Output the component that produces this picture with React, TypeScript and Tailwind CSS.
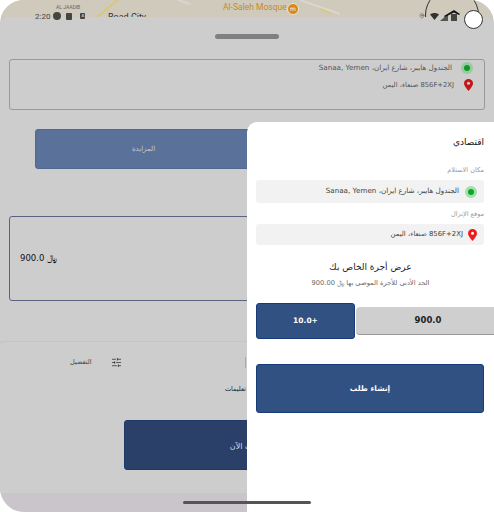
import React from 'react';
import { MapPin, SlidersHorizontal } from 'lucide-react';

const PICKUP = 'الجندول هايبر، شارع ايران، Sanaa, Yemen';
const DROPOFF = '856F+2XJ صنعاء، اليمن';

const GreenDot = ({ dim }: { dim?: boolean }) => (
  <span className={`w-[12px] h-[12px] rounded-full flex items-center justify-center shrink-0 ${dim ? 'bg-[#9ccaa0]' : 'bg-[#a5dfab]'}`}>
    <span className={`w-[6px] h-[6px] rounded-full ${dim ? 'bg-[#0a9a22]' : 'bg-[#0aa82a]'}`} />
  </span>
);

const RedPin = ({ dim }: { dim?: boolean }) => (
  <svg width="9" height="12" viewBox="0 0 9 12" className="shrink-0">
    <path d="M4.5 0C2 0 0 1.900 0 4.300 0 7.300 4.500 12 4.500 12S9 7.300 9 4.300C9 1.900 7 0 4.500 0Z" fill={dim ? '#c81414' : '#ef1c1c'} />
    <circle cx="4.500" cy="4.300" r="1.500" fill={dim ? '#cdcdcd' : '#fff'} />
  </svg>
);

const Background = () => (
  <div className="absolute inset-0 bg-[#c9c5cb] rounded-t-[24px] rounded-bl-[24px] overflow-hidden flex flex-col">
    {/* map strip behind the status bar */}
    <div className="h-[17px] bg-[#cfcabc] relative shrink-0 overflow-hidden">
      <svg width="494" height="17" viewBox="0 0 494 17" className="absolute inset-0">
        <path d="M97 17 118 0" stroke="#d8c87a" strokeWidth="2" fill="none" />
        <path d="M178 0 190 4M300 0 340 14" stroke="#d9d6d0" strokeWidth="2" fill="none" />
        <path d="M320 9 332 14" stroke="#d8c87a" strokeWidth="1.500" fill="none" />
      </svg>
      <span className="absolute left-[56px] top-[3px] text-[5px] leading-[8px] text-[#666] font-['Roboto',sans-serif]">AL JAADIB</span>
      <span className="absolute left-[108px] top-[12px] text-[9px] leading-[11px] text-[#333] font-['Roboto',sans-serif]">Road City</span>
      <span className="absolute left-[223px] top-[1px] text-[8.500px] leading-[12px] text-[#c98a1a] font-['Roboto',sans-serif]">Al-Saleh Mosque</span>
      <span className="absolute left-[287px] top-[3px] w-[12px] h-[12px] rounded-full bg-[#d98a0e] border border-[#e8e4da] flex items-center justify-center text-[6px] leading-[6px] text-white">m</span>
      <span className="absolute left-[425px] top-[-12px] w-[54px] h-[54px] rounded-full border border-[#333]" />
    </div>

    <div className="bg-[#cdcdcd] h-[324px] shrink-0 flex flex-col rounded-t-[8px]">
      <div className="mt-[17px] self-center w-[64px] h-[5px] rounded-full bg-[#808080]" />
      <div dir="rtl" className="mx-[9px] mt-[20px] h-[51px] border border-[#999] rounded-[3px] pr-[11px] pt-[2px] flex flex-col gap-[5px]">
        <div className="flex items-center gap-[9px] h-[12px] text-[7.200px] text-[#555]">
          <GreenDot dim />
          <span>{PICKUP}</span>
        </div>
        <div className="flex items-center gap-[10px] h-[12px] text-[6.800px] text-[#555]">
          <RedPin dim />
          <span>{DROPOFF}</span>
        </div>
      </div>
      <div className="ml-[35px] mt-[19px] h-[40px] w-[217px] bg-[#5a7199] border border-[#4f6894] rounded-[3px] flex items-center justify-center">
        <span className="text-[7px] text-[#c4cbd6]">المزايدة</span>
      </div>
      <div className="ml-[9px] mt-[47px] h-[85px] w-[476px] border border-[#5a6480] rounded-[3px] flex items-center pl-[10px]">
        <span className="text-[8.500px] text-[#111]">900.0 ﷼</span>
      </div>
    </div>

    <div className="bg-[#cdcdcd] border-t border-[#c4c4c4] h-[152px] rounded-tl-[4px] shrink-0 flex flex-col">
      <div className="flex items-center h-[40px] pt-[1px]">
        <span className="ml-[70px] w-[26px] text-[6.500px] text-[#444]">التفضيل</span>
        <SlidersHorizontal className="ml-[15px] w-[11px] h-[11px] text-[#222]" strokeWidth={1.500} />
        <span className="ml-[123px] w-px h-[11px] bg-[#aaa]" />
      </div>
      <div className="h-[16px] pl-[225px] flex items-center">
        <span className="text-[6.500px] text-[#222]">تعليمات</span>
      </div>
      <div className="ml-[124px] mt-[22px] h-[50px] w-[246px] bg-[#2a4069] border border-[#203a68] rounded-[3px] flex items-center justify-center">
        <span className="text-[8px] text-[#d8dce4] pt-[4px]">اطلب الآن</span>
      </div>
    </div>
  </div>
);

const StatusBar = () => (
  <div className="absolute left-0 right-0 top-[10px] h-[12px] flex items-center pl-[35px] pr-[11px] text-[#333]">
    <span className="text-[8px] text-[#444] font-['Roboto',sans-serif] translate-y-[1px]">2:20</span>
    <span className="ml-[3px] w-[8px] h-[8px] rounded-full bg-[#444]" />
    <span className="ml-[5px] w-[6px] h-[7px] rounded-[1px] bg-[#444]" />
    <span className="ml-[8px] w-[5px] h-[6px] rounded-[1px] bg-[#444] text-[4px] leading-[6px] text-center text-white">A</span>
    <MapPin className="ml-auto w-[6px] h-[8px] text-[#555]" />
    <svg width="9" height="7" viewBox="0 0 9 7" className="ml-[5px]"><path d="M0 1.500C2.500-.5 6.500-.5 9 1.500L4.500 7Z" fill="#333" /></svg>
    <svg width="20" height="11" viewBox="0 0 20 11" className="ml-[1px] -mt-[1px]">
      <path d="M0 11 8 4v7Z" fill="#555" />
      <path d="M4 6 14 0l6 4-1 1-5-2.500L5 7Z" fill="#111" />
      <rect x="11" y="4" width="6" height="7" fill="#444" />
    </svg>
    <span className="ml-[4px] translate-y-[3px] w-[19px] h-[19px] rounded-full bg-white border border-[#333]" />
  </div>
);

const FareDrawer = () => (
  <div dir="rtl" className="absolute left-[247px] right-0 top-[122px] bottom-0 bg-white rounded-tl-[10px] flex flex-col pr-[10px]">
    <h2 className="text-[9px] text-[#111] mt-[13px] leading-[15px]">اقتصادي</h2>
    <p className="text-[6.500px] text-[#999] mt-[15px] leading-[10px]">مكان الاستلام</p>
    <div className="mt-[5px] ml-[9px] h-[23px] bg-[#f2f2f2] rounded-[3px] flex items-center gap-[6px] pr-[7px] text-[7.200px] text-[#444]">
      <GreenDot />
      <span>{PICKUP}</span>
    </div>
    <p className="text-[6.500px] text-[#999] mt-[6px] leading-[10px]">موقع الإنزال</p>
    <div className="mt-[5px] ml-[9px] h-[21px] bg-[#f2f2f2] rounded-[3px] flex items-center gap-[5px] pr-[7px] text-[6.900px] text-[#444]">
      <RedPin />
      <span>{DROPOFF}</span>
    </div>
    <div className="mr-[-10px] mt-[14px] text-center">
      <p className="text-[9px] text-[#222] leading-[16px]">عرض أجرة الخاص بك</p>
      <p className="text-[6.700px] text-[#666] leading-[10px] mt-[3px]">الحد الأدنى للأجرة الموصى بها ﷼ 900.00</p>
    </div>
    <div className="flex items-center mt-[15px] mr-[-10px]">
      <div className="w-[138px] h-[28px] bg-[#cfcfcf] border-b border-[#999] rounded-l-[4px] flex items-center justify-center pl-[6px] text-[8.500px] font-semibold text-[#222] shrink-0 ml-[1px]">900.0</div>
      <div className="w-[99px] h-[36px] bg-[#315183] border border-[#153b7a] rounded-[3px] flex items-center justify-center text-[7.500px] font-semibold text-white shrink-0">+10.0</div>
    </div>
    <div className="mt-[25px] ml-[9px] h-[49px] bg-[#315183] border border-[#153b7a] rounded-[3px] flex items-center justify-center text-[7.500px] font-bold text-white">إنشاء طلب</div>
  </div>
);

export default function App() {
  return (
    <div className="relative w-[494px] h-[512px] bg-white overflow-hidden font-['DejaVu_Sans',sans-serif]">
      <Background />
      <StatusBar />
      <FareDrawer />
      <div className="absolute left-[183px] top-[501px] w-[128px] h-[3px] rounded-full bg-[#555]" />
    </div>
  );
}
